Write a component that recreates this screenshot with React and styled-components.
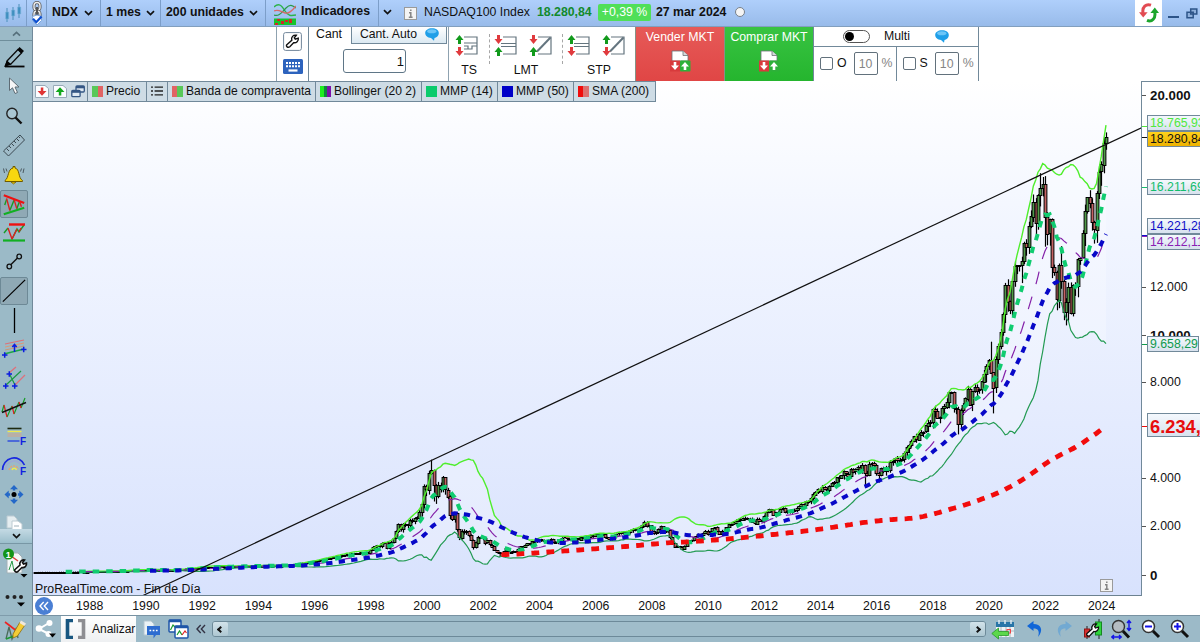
import React from "react";
import styled, { createGlobalStyle, css } from "styled-components";

/* ---------- market data ---------- */

const yearCloses = [132, 141, 156, 177, 223, 200, 330, 360, 398, 404, 576, 821, 990];

// monthly closes, january 1998 to march 2024
const monthCloses = [
  1071, 1194, 1220, 1248, 1192, 1337, 1377, 1140, 1345, 1400, 1557, 1836,
  2127, 1925, 2106, 2137, 2089, 2297, 2271, 2396, 2408, 2638, 2967, 3708,
  3570, 4267, 4398, 3773, 3324, 3764, 3610, 4078, 3570, 3283, 2507, 2342,
  2593, 1909, 1573, 1855, 1800, 1832, 1684, 1470, 1168, 1365, 1596, 1577,
  1550, 1360, 1452, 1278, 1208, 1051, 963, 942, 832, 990, 1116, 984,
  983, 1009, 1018, 1106, 1198, 1201, 1277, 1342, 1304, 1416, 1424, 1468,
  1493, 1471, 1439, 1401, 1466, 1517, 1401, 1369, 1413, 1487, 1572, 1621,
  1520, 1511, 1482, 1421, 1543, 1493, 1605, 1581, 1602, 1580, 1673, 1645,
  1710, 1671, 1703, 1701, 1579, 1575, 1510, 1579, 1654, 1733, 1791, 1757,
  1792, 1762, 1772, 1868, 1929, 1934, 1932, 1989, 2091, 2239, 2090, 2085,
  1842, 1746, 1782, 1918, 2033, 1837, 1849, 1872, 1595, 1335, 1186, 1212,
  1180, 1117, 1237, 1394, 1435, 1477, 1603, 1625, 1719, 1667, 1767, 1860,
  1741, 1819, 1959, 2001, 1852, 1739, 1864, 1768, 1998, 2124, 2118, 2218,
  2281, 2350, 2339, 2404, 2372, 2325, 2363, 2241, 2139, 2360, 2295, 2278,
  2468, 2623, 2755, 2723, 2525, 2616, 2642, 2772, 2799, 2647, 2678, 2661,
  2731, 2738, 2819, 2887, 2981, 2910, 3090, 3073, 3218, 3377, 3487, 3592,
  3522, 3696, 3595, 3582, 3736, 3849, 3892, 4082, 4049, 4158, 4337, 4236,
  4148, 4440, 4333, 4414, 4508, 4396, 4588, 4274, 4181, 4648, 4664, 4593,
  4279, 4201, 4483, 4341, 4523, 4417, 4730, 4771, 4875, 4801, 4810, 4863,
  5116, 5330, 5436, 5583, 5788, 5646, 5880, 5988, 5979, 6248, 6365, 6396,
  6950, 6855, 6581, 6606, 6968, 7041, 7232, 7654, 7628, 6967, 6949, 6330,
  6907, 7097, 7379, 7781, 7128, 7671, 7849, 7691, 7749, 8083, 8404, 8733,
  8992, 8462, 7813, 9001, 9556, 10157, 10906, 12111, 11418, 11053, 12268, 12888,
  12925, 12909, 13091, 13861, 13687, 14555, 14960, 15583, 14690, 15850, 16136, 16320,
  14930, 14238, 14839, 12855, 12643, 11504, 12948, 12272, 10971, 11406, 12030, 10940,
  12102, 12042, 13181, 13246, 14254, 15179, 15757, 15501, 14715, 14410, 15948, 16826,
  17137, 18044, 18280,
];

const extremes = {
  "2000-3": { high: 4816 },
  "2000-4": { low: 3100 },
  "2000-5": { low: 3000 },
  "2015-8": { low: 3787 },
  "2016-2": { low: 3889 },
  "2018-12": { low: 5895 },
  "2020-2": { high: 9736 },
  "2020-3": { low: 6771 },
  "2021-3": { low: 12208 },
  "2021-11": { high: 16765 },
  "2022-1": { low: 13725 },
  "2022-8": { high: 13720 },
  "2022-10": { low: 10441 },
  "2022-11": { low: 10632 },
  "2024-3": { high: 18465, low: 17765 },
};

const random = (n) => {
  const s = Math.sin(n * 127.1) * 43758.5453;
  return s - Math.floor(s);
};

const closes = [];
for (let m = 1; m < 144; m++) {
  const y = Math.floor(m / 12);
  const part = ((m % 12) + 1) / 12;
  const base = yearCloses[y] + (yearCloses[y + 1] - yearCloses[y]) * part;
  closes.push(base * (1 + (random(m) - 0.5) * 0.07));
}
closes.push(...monthCloses);

const STEP = 2.343;
const px = (i) => 35.2 + i * STEP;
const py = (v) => 575.2 - v * 0.02398;

const candles = closes.map((close, i) => {
  const open = i ? closes[i - 1] : close;
  const month = i + 1;
  const key = `${1986 + Math.floor(month / 12)}-${(month % 12) + 1}`;
  const swing = i > 155 && i < 195 ? 0.07 : 0.04;
  const high = Math.max(open, close) * (1 + random(i + 500) * swing * 0.5);
  const low = Math.min(open, close) * (1 - random(i + 900) * swing);
  return { open, close, high, low, ...extremes[key] };
});

const sma = (n) =>
  closes.map((_, i) =>
    i < n - 1 ? null : closes.slice(i - n + 1, i + 1).reduce((a, b) => a + b, 0) / n
  );

const wma = (n) =>
  closes.map((_, i) => {
    if (i < n - 1) return null;
    const sum = closes.slice(i - n + 1, i + 1).reduce((a, b, k) => a + b * (k + 1), 0);
    return sum / ((n * (n + 1)) / 2);
  });

const middle = sma(20);
const deviation = closes.map((_, i) => {
  if (i < 19) return null;
  const part = closes.slice(i - 19, i + 1);
  return Math.sqrt(part.reduce((a, b) => a + (b - middle[i]) ** 2, 0) / 20);
});
const upper = middle.map((v, i) => (v === null ? null : v + 2 * deviation[i]));
const lower = middle.map((v, i) => (v === null ? null : v - 2 * deviation[i]));

const toPoints = (series) =>
  series
    .map((v, i) => (v === null ? null : `${px(i).toFixed(1)},${py(v).toFixed(1)}`))
    .filter(Boolean);

const years = Array.from({ length: 19 }, (_, i) => 1988 + i * 2);

const axisLabels = [
  { text: "20.000", y: 95, bold: true },
  { text: "12.000", y: 287 },
  { text: "10.000", y: 335, bold: true },
  { text: "8.000", y: 382 },
  { text: "4.000", y: 478 },
  { text: "2.000", y: 526 },
  { text: "0", y: 575, bold: true },
];

const priceTags = [
  { text: "18.765,93", top: 115, color: "#4fe83c", y: 125 },
  { text: "18.280,84", top: 131, color: "#111", gold: true, y: 136 },
  { text: "16.211,69", top: 179, color: "#12bd6c", y: 186 },
  { text: "14.221,28", top: 218, color: "#0f0fc8", y: 234 },
  { text: "14.212,11", top: 234, color: "#8a1fb4", y: 235 },
  { text: "9.658,29", top: 336, color: "#0f9a4c", width: 52, y: 343 },
  { text: "6.234,53", top: 413, color: "#e80c0c", big: true, y: 425 },
];

/* ---------- chart ---------- */

const Chart = () => (
  <ChartSvg viewBox="33 81 1109 515">
    <defs>
      <linearGradient id="sky" x1="0" y1="0" x2="0" y2="1">
        <stop offset="0" stopColor="#ffffff" />
        <stop offset="0.3" stopColor="#f1f5ff" />
        <stop offset="1" stopColor="#d8e2fd" />
      </linearGradient>
    </defs>
    <rect x="33" y="81" width="1109" height="515" fill="url(#sky)" />
    <polygon
      points={[...toPoints(upper), ...toPoints(lower).reverse()].join(" ")}
      fill="#fff"
      opacity="0.25"
    />
    <g stroke="#000" strokeWidth="1">
      {candles.map((c, i) => {
        const x = Math.round(px(i)) + 0.5;
        const top = Math.round(py(Math.max(c.open, c.close))) + 0.5;
        const height = Math.max(1, Math.round(Math.abs(c.open - c.close) * 0.02398));
        return (
          <g key={i}>
            <path d={`M${x} ${py(c.high).toFixed(1)}V${(py(c.low) + 0.6).toFixed(1)}`} strokeWidth="1.2" />
            <rect
              x={x - 1.4}
              y={top}
              width="2.8"
              height={height}
              fill={c.close >= c.open ? "#4f9a48" : "#c46262"}
            />
          </g>
        );
      })}
    </g>
    <g fill="none">
      <polyline points={toPoints(upper).join(" ")} stroke="#4fee2c" strokeWidth="1.4" />
      <polyline points={toPoints(lower).join(" ")} stroke="#229a52" strokeWidth="1.2" />
      <polyline points={toPoints(middle).join(" ")} stroke="#8420a8" strokeWidth="1.2" strokeDasharray="13 13" />
      <polyline points={toPoints(wma(14)).join(" ")} stroke="#10cc70" strokeWidth="4" strokeDasharray="6.5 7" />
      <polyline points={toPoints(wma(50)).join(" ")} stroke="#0808c8" strokeWidth="4" strokeDasharray="6.3 6.3" />
      <polyline points={toPoints(sma(200)).join(" ")} stroke="#f20c0c" strokeWidth="4.8" strokeDasharray="7.8 7.2" />
    </g>
    <path d="M143 595.5L1142 127.5" stroke="#111" strokeWidth="1.2" />
    <path d="M33 595.5H1142" stroke="#6c8290" />
  </ChartSvg>
);

/* ---------- icons ---------- */

const Chevron = ({ up, color = "#111" }) => (
  <svg width="9" height="6" viewBox="0 0 9 6">
    <path d={up ? "M1 4.6L4.5 1.4L8 4.6" : "M1 1.2L4.5 4.6L8 1.2"} fill="none" stroke={color} strokeWidth="1.7" />
  </svg>
);

const CandlesIcon = () => (
  <svg width="20" height="22" viewBox="0 0 20 22">
    <path d="M4 5V19M10 4V17M16 1V15" stroke="#4c8fba" />
    <path d="M2.7 9h3v7h-3zM8.7 7h3v6h-3zM14.7 4h3v7h-3z" fill="#3f8fc0" stroke="#7ab4d6" strokeWidth=".6" />
  </svg>
);

const LinkIcon = () => (
  <svg width="16" height="25" viewBox="0 0 16 25">
    <rect x="5" y="1.5" width="6" height="8" rx="3" fill="none" stroke="#555" strokeWidth="3" />
    <rect x="5" y="1.5" width="6" height="8" rx="3" fill="none" stroke="#eee" strokeWidth="1.4" />
    <rect x="5" y="10" width="6" height="9" rx="3" fill="none" stroke="#555" strokeWidth="3" />
    <rect x="5" y="10" width="6" height="9" rx="3" fill="none" stroke="#eee" strokeWidth="1.4" />
    <path d="M8 6V14" stroke="#555" strokeWidth="2" />
    <path d="M3.5 15.5L8 14L12.5 15.5V19.5L8 24L3.5 19.5Z" fill="#fff" stroke="#7da6dc" />
    <path d="M4 17.8L7.2 21.2L12.6 15.5" fill="none" stroke="#0c4fd0" strokeWidth="2.2" />
  </svg>
);

const IndicatorsIcon = () => (
  <svg width="22" height="22" viewBox="0 0 22 22">
    <path d="M0 4C5-1 8 3 11 8S17 13 22 12" fill="none" stroke="#2db34a" strokeWidth="1.4" />
    <path d="M0 12C5 14 8 9 12 5S18 2 22 5" fill="none" stroke="#2a9a48" strokeWidth="1.2" />
    <path d="M0 8C5 6 7 9 11 10S18 8 22 3" fill="none" stroke="#d96a6a" strokeWidth="1.3" />
    <rect y="15.5" width="22" height="6.5" fill="#16c42c" />
    <path d="M3 16h3v2H3zM7 18h3v3H7zM11 17h3v2h-3zM15 16h3v4h-3zM1 20h3v2H1z" fill="#d02828" />
  </svg>
);

const InfoIcon = () => (
  <svg width="13" height="13" viewBox="0 0 13 13">
    <rect x=".5" y=".5" width="12" height="12" fill="#f4f4f4" stroke="#9a9a9a" />
    <path d="M6.8 2.4V4.1M5 5.7H6.8V10M4.8 10.2H8.6" fill="none" stroke="#858585" strokeWidth="1.5" />
  </svg>
);

const RefreshIcon = () => (
  <svg width="22" height="20" viewBox="0 0 22 20">
    <path d="M13 2.2C8 .5 4 4 5 10" fill="none" stroke="#e24b52" strokeWidth="3" />
    <path d="M1 9.3H9.6L5.2 14.6Z" fill="#e24b52" />
    <path d="M9 17.3C14 19.5 18 15 16.7 9" fill="none" stroke="#1ca52c" strokeWidth="3" />
    <path d="M12.4 10L16.8 4.6L21 10Z" fill="#1ca52c" />
  </svg>
);

const RestoreIcon = () => (
  <svg width="12" height="11" viewBox="0 0 12 11">
    <path d="M4.7.9H10.8V6H4.7zM1 4.2H7.2V9.8H1z" fill="#8fb0dc" stroke="#2d5488" strokeWidth="1.5" />
  </svg>
);

const WindowsIcon = () => (
  <svg width="14" height="13" viewBox="0 0 14 13">
    <rect x="5" y="1" width="8.3" height="6" rx="1" fill="#dfe9f2" stroke="#355784" strokeWidth="1.3" />
    <rect x="5" y="1" width="8.3" height="2.3" fill="#355784" />
    <rect x=".8" y="5.5" width="8.3" height="6.2" rx="1" fill="#dfe9f2" stroke="#355784" strokeWidth="1.3" />
    <rect x=".8" y="5.5" width="8.3" height="2.3" fill="#355784" />
  </svg>
);

const PageArrowIcon = ({ down }) => (
  <svg width="14" height="13" viewBox="0 0 14 13">
    <path d="M.5.5H10L13.5 3.5V12.5H.5Z" fill="#fbfdff" stroke="#98aab8" />
    <path
      d={down ? "M5.8 2.5H8.3V6H11.5L7 10.8L2.6 6H5.8Z" : "M5.8 10.6H8.3V7H11.5L7 2.2L2.6 7H5.8Z"}
      fill={down ? "#e03636" : "#14a81c"}
    />
  </svg>
);

const ListIcon = () => (
  <svg width="12" height="10" viewBox="0 0 12 10">
    <path d="M0 1.2H2M0 5H2M0 8.8H2M3.6 1.2H12M3.6 5H12M3.6 8.8H12" stroke="#222" strokeWidth="1.3" />
  </svg>
);

const wrenchPath =
  "M2 11.5L7 7C6 4 8.5 1.5 11.5 2L9.5 4.5L10.5 6L13.5 5C14 8 11.5 10 8.8 9.5L5 13.5C3 15 .8 13 2 11.5Z";

const WrenchIcon = () => (
  <svg width="19" height="19" viewBox="0 0 19 19">
    <rect x=".6" y=".6" width="17.8" height="17.8" rx="2" fill="#fff" stroke="#71869a" />
    <path d={wrenchPath} transform="translate(1.8 1.2)" fill="none" stroke="#111" strokeWidth="1.4" />
  </svg>
);

const KeyboardIcon = () => (
  <svg width="20" height="15" viewBox="0 0 20 15">
    <rect width="20" height="15" rx="1.5" fill="#2d63bd" />
    <path d="M3 4H17M3 7.3H17" stroke="#fff" strokeWidth="2" strokeDasharray="2 1" />
    <path d="M5.5 11.5H14.5" stroke="#fff" strokeWidth="2.2" />
  </svg>
);

const BubbleIcon = () => (
  <svg width="14" height="13" viewBox="0 0 14 13">
    <path
      d="M7 .3C11 .3 13.8 2.3 13.8 5S11.5 9.8 9.5 10L9 12.7L6 10C2.5 9.7.2 7.6.2 5S3 .3 7 .3Z"
      fill="#1f9fe8"
    />
    <ellipse cx="6.8" cy="3.3" rx="4.6" ry="2" fill="#6cc6f8" />
  </svg>
);

const ArrowUp = ({ x, y }) => (
  <path
    d={`M${x - 1.5} ${y + 9}V${y + 5}H${x - 4}L${x} ${y}L${x + 4} ${y + 5}H${x + 1.5}V${y + 9}Z`}
    fill="#129a1c"
  />
);

const ArrowDown = ({ x, y }) => (
  <path
    d={`M${x - 1.5} ${y}V${y + 4}H${x - 4}L${x} ${y + 9}L${x + 4} ${y + 4}H${x + 1.5}V${y}Z`}
    fill="#e03a3e"
  />
);

const OrderIcon = ({ kind, sellFirst }) => (
  <svg width="24" height="23" viewBox="0 0 24 23">
    <g fill="none" stroke="#64757f" strokeWidth="1.2">
      {kind === "steps" && <path d="M9 3H22V20H9M9 15H17V12H22M9 9H22M9 12H13V15" />}
      {kind === "levels" && <path d="M9 3H22V9.5H7M22 9.5V12.5M7 12.5H22V20H9" />}
      {kind === "line" && <path d="M9 3H22V20H9" />}
      {kind === "line" && <path d="M8 17.5L21.5 3.5" strokeWidth="2" />}
    </g>
    {sellFirst ? <ArrowDown x={4.5} y={1} /> : <ArrowUp x={4.5} y={1} />}
    {sellFirst ? <ArrowUp x={4.5} y={13} /> : <ArrowDown x={4.5} y={13} />}
  </svg>
);

const MarketIcon = () => (
  <svg width="22" height="22" viewBox="0 0 22 22">
    <path d="M3 1H14L19 5.5V11H3Z" fill="#fff" stroke="#6d7276" strokeWidth=".8" />
    <path d="M14 1V5.5H19" fill="#d5dadd" stroke="#6d7276" strokeWidth=".8" />
    <rect x="1" y="10.5" width="10" height="11" fill="#d83a3c" />
    <rect x="11" y="10.5" width="10.5" height="11" rx="1" fill="#2eb03a" />
    <path
      d="M4.7 12H7.3V15.5H10L6 20L2 15.5H4.7ZM14.7 20H17.3V16.5H20L16 12L12 16.5H14.7Z"
      fill="#fff"
    />
  </svg>
);

const ToolText = styled.text`
  font-size: ${({ $light }) => ($light ? 9 : 10)}px;
  font-weight: 700;
  fill: ${({ $light }) => ($light ? "white" : "#1020e0")};
`;

const toolIcons = {
  draw: (
    <>
      <path d="M7 17L18 5.5L21.5 9L11 20L6 21Z" fill="none" stroke="#0a0a0a" strokeWidth="1.3" />
      <path d="M17.5 5.5L19.5 3L24 7L21.5 9.5ZM7 16.5L11.5 20.5L4 23Z" fill="#050505" />
      <path d="M5 22.5H24.5" stroke="#050505" strokeWidth="1.8" />
    </>
  ),
  cursor: <path d="M9.5 5V17.5L12.5 14.8L15 20.5L17.5 19.5L15 14H19Z" fill="#f7f7f7" stroke="#5e6c75" />,
  zoom: (
    <>
      <circle cx="12" cy="11.5" r="5.2" fill="#a9c6d2" stroke="#222" strokeWidth="1.4" />
      <path d="M15.5 15.5L21.5 21.5" stroke="#111" strokeWidth="2.4" />
    </>
  ),
  ruler: (
    <>
      <path d="M3.5 20L20 4L24.5 9L8.5 25Z" fill="#a0bcc9" stroke="#3b4a52" />
      <path
        d="M6.5 17.5L9 20M9 15L11 17M11.5 12.5L14 15M14 10L16 12M16.5 7.5L19 10M18.5 5.5L20 7"
        stroke="#3b4a52"
      />
    </>
  ),
  bell: (
    <>
      <path d="M5 19.5C9 17 7.5 8 13 7V5.5H15V7C20 8 18 17 22.5 19.5V20.5H5Z" fill="#f7d70f" stroke="#6f5a00" />
      <path d="M11 21H16L13.5 23Z" fill="#f2c800" stroke="#6f5a00" strokeWidth=".7" />
      <path
        d="M6 7.5L7 10.5M3.5 7.5L4.5 12M21.5 7.5L20.5 10.5M24 7.5L23 12"
        fill="none"
        stroke="#4b5960"
      />
    </>
  ),
  wedge: (
    <>
      <path d="M4 15L6 9M9.5 21L14 10M17 19L20 11" stroke="#169c24" strokeWidth="1.5" />
      <path d="M6 8L9.5 21M14 9L17 19M20 11L22 17" stroke="#dc2020" strokeWidth="1.5" />
      <path d="M3 4.5L25 13" stroke="#ee1111" strokeWidth="2.4" />
      <path d="M3 25L25 18" stroke="#11b022" strokeWidth="2.4" />
    </>
  ),
  range: (
    <>
      <path d="M4 14L8 9M12 20L17 10L19 13L24 6" fill="none" stroke="#169c24" strokeWidth="1.4" />
      <path d="M8 9L12 20L17 10M19 13L21 9" fill="none" stroke="#dc2020" strokeWidth="1.4" />
      <path d="M9 5.5H25" stroke="#ee1111" strokeWidth="2.4" />
      <path d="M3 21.5H25" stroke="#11b022" strokeWidth="2.2" />
    </>
  ),
  segment: (
    <>
      <path d="M9.5 18L19 8.5" stroke="#111" strokeWidth="1.5" />
      <circle cx="9.3" cy="18.5" r="2.3" fill="#9bbac6" stroke="#111" strokeWidth="1.3" />
      <circle cx="19.2" cy="8.5" r="2.3" fill="#9bbac6" stroke="#111" strokeWidth="1.3" />
    </>
  ),
  line: <path d="M2 25.5L26 2" stroke="#000" strokeWidth="1.3" />,
  vertical: <path d="M14.5 2V27" stroke="#000" strokeWidth="1.3" />,
  channel: (
    <>
      <path d="M5 9L24 5" stroke="#dc7078" strokeWidth="1.2" />
      <path d="M5 12L24 8" stroke="#dc9878" />
      <path d="M5 15L24 11" stroke="#c89878" />
      <path d="M4 19L24 14" stroke="#1ca845" strokeWidth="1.4" />
      <path
        d="M2 20H7.5M4.7 17.3V22.7M21 14.5H26.5M23.7 11.8V17.2M14.5 17V10M12.3 12L14.5 9.5L16.7 12"
        fill="none"
        stroke="#0b1de0"
        strokeWidth="1.5"
      />
    </>
  ),
  fork: (
    <>
      <path d="M9 8L16 2M15 20L25 10" stroke="#e0707b" strokeWidth="1.3" />
      <path d="M6 20L21 6M9 8L15 20" stroke="#1c9a45" strokeWidth="1.2" />
      <path
        d="M6.5 9H12M9.3 6.3V11.7M3 21H8.5M5.7 18.3V23.7M12 21H17.5M14.7 18.3V23.7"
        stroke="#0b1de0"
        strokeWidth="1.5"
      />
    </>
  ),
  regression: (
    <>
      <path d="M2 18L4 11M7 23L12 12M14 20L19 8M21 14L25 4" stroke="#169c24" strokeWidth="1.2" />
      <path d="M4 11L7 23M12 12L14 20M19 8L21 14" stroke="#dc2020" strokeWidth="1.2" />
      <path d="M2 18.5L26 8.5" stroke="#111" strokeWidth="1.4" />
    </>
  ),
  fibonacci: (
    <>
      <path d="M7.5 5.5H21.5" stroke="#1d2910" strokeWidth="1.6" />
      <path d="M7.5 8.5H21.5" stroke="#efe94c" strokeWidth="1.4" />
      <path d="M7.5 11H21.5M7.5 13H21.5" stroke="#d8a483" strokeWidth="1.2" />
      <path d="M7.5 18H19.5" stroke="#2948e0" strokeWidth="1.4" />
      <ToolText x="20" y="22">F</ToolText>
    </>
  ),
  arc: (
    <>
      <path d="M2.5 18A11.5 12 0 0 1 24.5 13" fill="none" stroke="#1727e0" strokeWidth="1.6" />
      <path d="M5.5 18A8.5 9 0 0 1 21 13" fill="none" stroke="#9cabd3" strokeWidth="1.8" />
      <path d="M9 18A5 5 0 0 1 18.5 17" fill="none" stroke="#dfa57a" strokeWidth="1.5" strokeDasharray="2 1" />
      <path d="M12 18A2.5 3 0 0 1 16.5 18" fill="none" stroke="#efe94c" strokeWidth="1.6" />
      <ToolText x="20" y="22.5">F</ToolText>
    </>
  ),
  move: (
    <>
      <circle cx="14" cy="13.5" r="2.5" fill="#000" />
      <path
        d="M14 4L18 8.2H15.2V9.5H12.8V8.2H10ZM14 23L18 18.8H15.2V17.5H12.8V18.8H10ZM4.5 13.5L8.7 9.5V12.3H10V14.7H8.7V17.5ZM23.5 13.5L19.3 9.5V12.3H18V14.7H19.3V17.5Z"
        fill="#2468c8"
      />
    </>
  ),
  copy: (
    <>
      <path d="M7 6H14L17 9V18H7Z" fill="#e5edf0" stroke="#bccbd2" />
      <path d="M12 11H18L22 14V22H12Z" fill="#fff" stroke="#bccbd2" />
      <path d="M14 16H19" stroke="#9fb1ba" />
    </>
  ),
};

const tools = [
  "draw", "cursor", "zoom", "ruler", "bell", "wedge", "range", "segment", "line",
  "vertical", "channel", "fork", "regression", "fibonacci", "arc", "move", "copy",
];
const pressed = ["wedge", "line"];

const ObjectsIcon = () => (
  <svg width="28" height="34" viewBox="0 0 28 34">
    <path d="M7 7H18L22 11V27H7Z" fill="#f4f8f8" stroke="#a2b0b6" />
    <path d="M9 24L12 15M14 25L12 15" stroke="#2a9a48" />
    <path d="M11 10L18 15" stroke="#dd3d3d" strokeWidth="1.5" />
    <circle cx="8.5" cy="8" r="5.5" fill="#139418" />
    <ToolText x="5.8" y="11.5" $light>1</ToolText>
    <path d={wrenchPath} transform="translate(13 12)" fill="#fff" stroke="#111" strokeWidth="1.6" />
    <path d="M20.5 28H27.5L24 31.5Z" fill="#000" />
  </svg>
);

const MoreIcon = () => (
  <svg width="28" height="16" viewBox="0 0 28 16">
    <circle cx="7.5" cy="4" r="2" fill="#222" />
    <circle cx="14.5" cy="4" r="2" fill="#222" />
    <circle cx="21" cy="4" r="2" fill="#222" />
    <path d="M17 9.5H25L21 13.5Z" fill="#000" />
  </svg>
);

const PencilChartIcon = () => (
  <svg width="24" height="22" viewBox="0 0 24 22">
    <path d="M3 20L6 8L9 20L13 10L15 19" fill="none" stroke="#4b6b5a" strokeWidth="1.3" />
    <path d="M2 3L15 13" stroke="#e22" strokeWidth="1.6" />
    <path d="M3 20L11 17" stroke="#1a9a30" strokeWidth="1.5" />
    <path d="M10 15L17 3L22 6L14.5 17L10 19Z" fill="#f5cc35" stroke="#8c6d13" strokeWidth=".8" />
    <path d="M16.5 4L18 1.5L23 4.5L21.5 7Z" fill="#f1e8dc" />
  </svg>
);

const ShareIcon = () => (
  <svg width="22" height="20" viewBox="0 0 22 20">
    <path d="M14 4L4 10L14 15" fill="none" stroke="#fff" strokeWidth="2" />
    <circle cx="14.5" cy="4" r="3" fill="#fff" />
    <circle cx="4" cy="9.5" r="3.3" fill="#fff" />
    <circle cx="13.5" cy="15" r="3" fill="#fff" />
    <path d="M14 14.5H21L17.5 18.5Z" fill="#000" />
  </svg>
);

const BracketsIcon = () => (
  <svg width="21" height="20" viewBox="0 0 21 20">
    <path d="M8 1.5H2.5V18.5H8" fill="none" stroke="#175680" strokeWidth="3.6" />
    <path d="M13 1.5H18.5V18.5H13" fill="none" stroke="#8e8e92" strokeWidth="3.6" />
  </svg>
);

const ChatIcon = () => (
  <svg width="18" height="19" viewBox="0 0 18 19">
    <path d="M1 1H8L11 4V15H1Z" fill="#eaf2f6" stroke="#b4c5cf" />
    <path d="M4 6H17V15H13L10.5 18.5V15H4Z" fill="#2d6cd0" />
    <path d="M6.5 10.5H15" stroke="#fff" strokeWidth="1.7" strokeDasharray="1.7 1.5" />
  </svg>
);

const ChartsIcon = () => (
  <svg width="21" height="20" viewBox="0 0 21 20">
    <rect x="1" y="1" width="12" height="12" rx="1" fill="#fff" stroke="#1e56a8" strokeWidth="1.5" />
    <path d="M1 2H13" stroke="#1e56a8" strokeWidth="2.5" />
    <path d="M2.5 11L5 6L8 9" fill="none" stroke="#1a9a30" strokeWidth="1.2" />
    <rect x="7" y="7" width="13" height="12" rx="1" fill="#fff" stroke="#1e56a8" strokeWidth="1.5" />
    <path d="M7 8H20" stroke="#1e56a8" strokeWidth="2.5" />
    <path d="M9 16L11.5 12L14 16" fill="none" stroke="#1a9a30" strokeWidth="1.2" />
    <path d="M14 16L17 12L18.5 14" fill="none" stroke="#d22" strokeWidth="1.2" />
  </svg>
);

const DoubleLeft = ({ color = "#334" }) => (
  <svg width="10" height="10" viewBox="0 0 10 10">
    <path d="M4.7 1L1 5L4.7 9M9 1L5.3 5L9 9" fill="none" stroke={color} strokeWidth="1.4" />
  </svg>
);

const CalendarBackIcon = () => (
  <svg width="24" height="21" viewBox="0 0 24 21">
    <rect x="5" y="3" width="18" height="15" fill="#eef3f6" />
    <rect x="5" y="3" width="18" height="5" fill="#2875a8" />
    <path d="M8 1V5M14 1V5M20 1V5" stroke="#d9e9f2" strokeWidth="1.5" />
    <path d="M5 12H23M10 8V18M15 8V18M19 8V18" stroke="#a9b6be" />
    <rect x="16" y="10.5" width="3.5" height="3.5" fill="none" stroke="#e44" />
    <path
      d="M.8 14.5L7.5 9V12.5H17.5V16.5H7.5V20Z"
      fill="#5cd84c"
      stroke="#279a28"
      strokeWidth=".8"
    />
  </svg>
);

const UndoIcon = ({ redo }) => (
  <svg width="18" height="18" viewBox="0 0 18 18">
    <g transform={redo ? "translate(18 0) scale(-1 1)" : undefined}>
      <path
        d="M1 6L7.5 1V4C15 4 18 10 12 17C14 11 12 8.5 7.5 8.5V11Z"
        fill={redo ? "#72a9d2" : "#1166d8"}
      />
    </g>
  </svg>
);

const CandleSettingsIcon = () => (
  <svg width="20" height="21" viewBox="0 0 20 21">
    <path d="M4 7V20M16 0V20" stroke="#222" />
    <rect x="1.5" y="10" width="5" height="8" fill="#d83030" stroke="#8e1414" />
    <rect x="12.5" y="3" width="6" height="13" fill="#2ed53c" stroke="#158722" />
    <path d={wrenchPath} transform="translate(2 3)" fill="#fff" stroke="#111" strokeWidth="1.3" />
  </svg>
);

const LensIcon = ({ sign }) => (
  <svg width="20" height="20" viewBox="0 0 20 20">
    <path d="M11.5 11.5L18 18" stroke="#111" strokeWidth="3" />
    <circle cx="7.5" cy="7.5" r="6" fill="#fff" stroke="#333" strokeWidth="1.5" />
    <path d={sign === "plus" ? "M4 7.5H11M7.5 4V11" : "M4 7.5H11"} stroke="#1313e8" strokeWidth="2" />
  </svg>
);

const FitIcon = () => (
  <svg width="21" height="21" viewBox="0 0 21 21">
    <path d="M11 11L18 18.5" stroke="#111" strokeWidth="3" />
    <circle cx="7.5" cy="7.5" r="6" fill="#b4bcc2" stroke="#333" strokeWidth="1.4" />
    <path
      d="M18 2V11M16 4L18 1.5L20 4M16 9L18 11.5L20 9M1 18H9M3 16L.8 18L3 20M8 16L10.2 18L8 20"
      fill="none"
      stroke="#1313e8"
      strokeWidth="1.4"
    />
  </svg>
);

/* ---------- page ---------- */

const App = () => (
  <>
    <GlobalStyle />
    <Screen>
      <Header>
        <Menu $width={27}><CandlesIcon /></Menu>
        <Menu $width={20}><LinkIcon /></Menu>
        <Menu $width={54} $spread><span>NDX</span><Chevron /></Menu>
        <Menu $width={60} $spread><span>1 mes</span><Chevron /></Menu>
        <Menu $width={105} $spread><span>200 unidades</span><Chevron /></Menu>
        <Menu $width={113} $raised><IndicatorsIcon /><span>Indicadores</span></Menu>
        <Quote>
          <Chevron />
          <InfoSlot><InfoIcon /></InfoSlot>
          <Name>NASDAQ100 Index</Name>
          <Last>18.280,84</Last>
          <Change>+0,39 %</Change>
          <Day>27 mar 2024</Day>
          <Dot />
        </Quote>
        <Refresh><RefreshIcon /></Refresh>
        <WindowButtons><Minimize /><RestoreIcon /></WindowButtons>
      </Header>

      <Body>
        <Sidebar>
          <ScrollUp><Chevron up color="#56707c" /></ScrollUp>
          <ToolList>
            {tools.map((name) => (
              <Tool key={name} $pressed={pressed.includes(name)}>
                <svg width="28" height="28" viewBox="0 0 28 28">{toolIcons[name]}</svg>
              </Tool>
            ))}
          </ToolList>
          <ScrollDown><Chevron /></ScrollDown>
          <ObjectsSlot><ObjectsIcon /></ObjectsSlot>
          <MoreSlot><MoreIcon /></MoreSlot>
          <PencilSlot><PencilChartIcon /></PencilSlot>
        </Sidebar>

        <Main>
          <TradePanel>
            <Spacer />
            <Shortcuts><WrenchIcon /><KeyboardIcon /></Shortcuts>
            <Quantity>
              <QuantityTop>
                <span>Cant</span>
                <AutoButton>Cant. Auto<BubbleIcon /></AutoButton>
              </QuantityTop>
              <QuantityInput>1</QuantityInput>
            </Quantity>
            <Orders>
              <OrderGroup $width={40}>
                <IconPair><OrderIcon kind="steps" /></IconPair>
                <span>TS</span>
              </OrderGroup>
              <OrderGroup $width={73}>
                <IconPair><OrderIcon kind="levels" sellFirst /><OrderIcon kind="line" sellFirst /></IconPair>
                <span>LMT</span>
              </OrderGroup>
              <OrderGroup $width={73}>
                <IconPair><OrderIcon kind="levels" /><OrderIcon kind="line" /></IconPair>
                <span>STP</span>
              </OrderGroup>
            </Orders>
            <MarketButton $sell>Vender MKT<MarketIcon /></MarketButton>
            <MarketButton>Comprar MKT<MarketIcon /></MarketButton>
            <Multi>
              <MultiTop><Switch><i /></Switch><span>Multi</span><BubbleIcon /></MultiTop>
              <MultiBottom>
                {["O", "S"].map((name) => (
                  <Leg key={name}><Check /><span>{name}</span><Percent>10</Percent><em>%</em></Leg>
                ))}
              </MultiBottom>
            </Multi>
            <Rest />
          </TradePanel>

          <ChartRow>
            <Plot>
              <Chart />
              <Legend>
                <LegendItem $width={55} $icons>
                  <PageArrowIcon down /><PageArrowIcon /><WindowsIcon />
                </LegendItem>
                <LegendItem $width={59}><Swatch $colors={["#58c858", "#e06464"]} />Precio</LegendItem>
                <LegendItem $width={21} $icons><ListIcon /></LegendItem>
                <LegendItem $width={148}><Swatch $colors={["#e06464", "#58c858"]} />Banda de compraventa</LegendItem>
                <LegendItem $width={106}><Swatch $colors={["#1fee1f", "#0c8a3c", "#7c10a8"]} />Bollinger (20 2)</LegendItem>
                <LegendItem $width={76}><Swatch $colors={["#0acb6c"]} />MMP (14)</LegendItem>
                <LegendItem $width={76}><Swatch $colors={["#0000c8"]} />MMP (50)</LegendItem>
                <LegendItem $width={82}><Swatch $colors={["#f00c0c", "#dc7070"]} />SMA (200)</LegendItem>
              </Legend>
              <Credit>ProRealTime.com - Fin de Día</Credit>
              <PlotInfo><InfoIcon /></PlotInfo>
            </Plot>
            <PriceAxis>
              {axisLabels.map(({ text, y, bold }) => (
                <AxisLabel key={text} style={{ top: y - 81 }} $bold={bold}>{text}</AxisLabel>
              ))}
              {priceTags.map(({ text, top, y, ...look }) => (
                <React.Fragment key={text}>
                  <Mark style={{ top: y - 81 }} $color={look.color} />
                  <PriceTag
                    style={{ top: top - 81 }}
                    $color={look.color}
                    $gold={look.gold}
                    $big={look.big}
                    $width={look.width}
                  >
                    {text}
                  </PriceTag>
                </React.Fragment>
              ))}
            </PriceAxis>
          </ChartRow>

          <TimeAxis>
            <Rewind><Circle><DoubleLeft color="#fff" /></Circle></Rewind>
            {years.map((year) => (
              <Year key={year}>{year}</Year>
            ))}
          </TimeAxis>

          <Footer>
            <Share><ShareIcon /></Share>
            <Analyze><BracketsIcon /><span>Analizar</span></Analyze>
            <FooterIcons><ChatIcon /><ChartsIcon /><DoubleLeft /></FooterIcons>
            <ScrollBar>
              <ScrollButton><Caret $left /></ScrollButton>
              <ScrollButton><Caret /></ScrollButton>
            </ScrollBar>
            <Actions>
              <Action $width={34}><CalendarBackIcon /></Action>
              <Action><UndoIcon /></Action>
              <Action><UndoIcon redo /></Action>
              <Action><CandleSettingsIcon /></Action>
              <Action><FitIcon /></Action>
              <Action><LensIcon sign="minus" /></Action>
              <Action><LensIcon sign="plus" /></Action>
            </Actions>
          </Footer>
        </Main>
      </Body>
    </Screen>
  </>
);

export default App;

const line = "#71899a";

const GlobalStyle = createGlobalStyle`
  * {
    box-sizing: border-box;
  }
  body {
    margin: 0;
    overflow: hidden;
    font-family: "Liberation Sans", Arial, sans-serif;
    font-size: 12.3px;
    color: #111;
  }
  svg {
    display: block;
    flex-shrink: 0;
  }
`;

const Screen = styled.div`
  width: 1200px;
  height: 642px;
  display: flex;
  flex-direction: column;
  overflow: hidden;
  background: white;
`;

const Header = styled.div`
  height: 27px;
  flex-shrink: 0;
  display: flex;
  background: linear-gradient(#afcffb, #98bbea);
  border-bottom: 1px solid #829fbe;
  white-space: nowrap;
`;

const Menu = styled.div`
  width: ${({ $width }) => $width}px;
  flex-shrink: 0;
  display: flex;
  align-items: center;
  justify-content: ${({ $spread }) => ($spread ? "space-between" : "center")};
  gap: 5px;
  padding: ${({ $spread }) => ($spread ? "0 7px 2px 5px" : "0")};
  padding-bottom: ${({ $raised }) => $raised && "4px"};
  font-weight: 700;
  border-right: 1px solid #7c9ec9;

  svg {
    margin-top: ${({ $raised }) => ($raised ? "5px" : "1px")};
  }
`;

const Quote = styled.div`
  flex: 1;
  display: flex;
  align-items: center;
  padding: 0 0 2px 4px;
`;

const InfoSlot = styled.div`
  margin: 2px 7px 0 12px;
`;

const Name = styled.span`
  width: 113px;
`;

const Last = styled.span`
  width: 61px;
  font-weight: 700;
  color: #128a2c;
`;

const Change = styled.span`
  width: 53px;
  height: 17px;
  line-height: 17px;
  text-align: center;
  font-size: 12.3px;
  color: white;
  background: #50df58;
  border-radius: 2px;
`;

const Day = styled.span`
  width: 79px;
  margin-left: 5px;
  font-weight: 700;
`;

const Dot = styled.div`
  width: 10px;
  height: 10px;
  border: 1px solid #77808a;
  border-radius: 50%;
  background: #f4f4f4;
`;

const Refresh = styled.div`
  width: 27px;
  display: flex;
  align-items: center;
  justify-content: center;
  background: white;
`;

const WindowButtons = styled.div`
  width: 38px;
  display: flex;
  gap: 7px;
  align-items: center;
  padding-left: 6px;
`;

const Minimize = styled.div`
  width: 11px;
  height: 2px;
  margin-top: 7px;
  background: #2d5488;
`;

const Body = styled.div`
  flex: 1;
  display: flex;
  min-height: 0;
`;

const Sidebar = styled.div`
  width: 33px;
  flex-shrink: 0;
  display: flex;
  flex-direction: column;
  background: #9bbac7;
  border-right: 1px solid ${line};
`;

const ScrollUp = styled.div`
  height: 14px;
  display: flex;
  align-items: center;
  justify-content: center;
  border-bottom: 1px solid #6f8e9b;
`;

const ToolList = styled.div`
  height: 488px;
  padding-top: 2.5px;
  overflow: hidden;
`;

const Tool = styled.div`
  width: 28px;
  height: 29.15px;
  display: flex;
  align-items: center;
  ${({ $pressed }) =>
    $pressed &&
    css`
      svg {
        background: #8fa9b5;
        border: 1px solid #6d8996;
        border-radius: 2px;
      }
    `}
`;

const ScrollDown = styled.div`
  height: 15px;
  display: flex;
  align-items: center;
  justify-content: center;
  background: linear-gradient(#c4dae4, #9bbecb);
  border-bottom: 1px solid #7897a5;
`;

const ObjectsSlot = styled.div`
  height: 47px;
  padding-top: 2px;
`;

const MoreSlot = styled.div`
  height: 24px;
  padding-top: 2px;
`;

const PencilSlot = styled.div`
  flex: 1;
  padding: 3px 0 0 3px;
  border-top: 1px solid #7f9cab;
`;

const Main = styled.div`
  flex: 1;
  min-width: 0;
  display: flex;
  flex-direction: column;
`;

const TradePanel = styled.div`
  height: 54px;
  flex-shrink: 0;
  display: flex;
  background: white;
`;

const Spacer = styled.div`
  width: 243px;
`;

const Rest = styled.div`
  flex: 1;
`;

const Shortcuts = styled.div`
  width: 33px;
  display: flex;
  flex-direction: column;
  align-items: center;
  gap: 8px;
  padding-top: 5px;
  border-left: 1px solid #8fa2b0;
  border-right: 1px solid ${line};
`;

const Quantity = styled.div`
  width: 140px;
  display: flex;
  flex-direction: column;
  border-right: 1px solid #8fa2b0;
`;

const QuantityTop = styled.div`
  height: 17px;
  display: flex;
  justify-content: space-between;
  align-items: flex-start;
  padding: 0 1px 0 7px;
`;

const AutoButton = styled.div`
  width: 96px;
  height: 17px;
  display: flex;
  align-items: center;
  gap: 8px;
  padding: 0 0 2px 8px;
  font-size: 12.2px;
  white-space: nowrap;
  background: linear-gradient(#fff, #dbe9f2);
  border: 1px solid ${line};
  border-top: none;
`;

const QuantityInput = styled.div`
  width: 63px;
  height: 24px;
  margin: 5px 0 0 34px;
  padding-right: 1px;
  line-height: 23px;
  text-align: right;
  font-size: 13px;
  border: 1px solid #5f7687;
  border-radius: 3px;
`;

const Orders = styled.div`
  width: 186px;
  display: flex;
  padding-top: 7px;
`;

const OrderGroup = styled.div`
  width: ${({ $width }) => $width}px;
  display: flex;
  flex-direction: column;
  align-items: center;
  gap: 6px;

  & + & {
    border-left: 1px dashed #a6a6a6;
    height: 30px;
  }
`;

const IconPair = styled.div`
  display: flex;
  gap: 11px;
  margin-right: 5px;
`;

const MarketButton = styled.div`
  width: 89px;
  display: flex;
  flex-direction: column;
  align-items: center;
  padding-top: 3px;
  line-height: 15px;
  gap: 5px;
  white-space: nowrap;
  color: white;
  border-left: 1px solid #849286;
  background: ${({ $sell }) =>
    $sell ? "linear-gradient(#e65a58, #e04645)" : "linear-gradient(#38c342, #25b52e)"};
`;

const Multi = styled.div`
  width: 166px;
  display: flex;
  flex-direction: column;
  border-left: 1px solid ${line};
  border-right: 1px solid ${line};
`;

const MultiTop = styled.div`
  height: 20px;
  display: flex;
  align-items: center;
  padding: 0 0 1px 29px;
  border-bottom: 1px solid ${line};

  span {
    width: 51px;
    margin-left: 14px;
  }
`;

const Switch = styled.div`
  width: 27px;
  height: 13px;
  padding: 1px;
  border: 1px solid #555;
  border-radius: 7px;

  i {
    display: block;
    width: 9px;
    height: 9px;
    border-radius: 50%;
    background: black;
  }
`;

const MultiBottom = styled.div`
  flex: 1;
  display: flex;
`;

const Leg = styled.div`
  flex: 1;
  display: flex;
  align-items: center;
  gap: 4px;
  padding: 0 0 2px 6px;

  & + & {
    border-left: 1px solid ${line};
  }

  em {
    font-style: normal;
    color: #858585;
  }
`;

const Check = styled.div`
  width: 13px;
  height: 13px;
  border: 1px solid #62717c;
  border-radius: 2px;
`;

const Percent = styled.div`
  width: 24px;
  height: 23px;
  margin-left: 3px;
  line-height: 23px;
  text-align: center;
  color: #858585;
  border: 1px solid #62717c;
  border-radius: 2px;
`;

const ChartRow = styled.div`
  height: 515px;
  flex-shrink: 0;
  display: flex;
  box-shadow: inset 0 1px ${line};
`;

const Plot = styled.div`
  width: 1109px;
  position: relative;
  border-top: 1px solid ${line};
`;

const ChartSvg = styled.svg`
  width: 1109px;
  height: 515px;
  margin-top: -1px;
`;

const Legend = styled.div`
  position: absolute;
  top: -1px;
  left: 0;
  height: 21px;
  display: flex;
  font-size: 12.1px;
  background: #cedce5;
  border-top: 1px solid ${line};
  border-bottom: 1px solid ${line};
`;

const LegendItem = styled.div`
  width: ${({ $width }) => $width}px;
  display: flex;
  align-items: center;
  justify-content: ${({ $icons }) => ($icons ? "center" : "flex-start")};
  gap: ${({ $icons }) => ($icons ? 4 : 3)}px;
  padding: 0 0 1px ${({ $icons }) => ($icons ? 0 : 4)}px;
  white-space: nowrap;
  border-right: 1px solid ${line};
`;

const Swatch = styled.span`
  width: 11px;
  height: 11px;
  flex-shrink: 0;
  background: ${({ $colors }) =>
    `linear-gradient(90deg, ${$colors
      .map((c, i) => `${c} ${(i * 100) / $colors.length}% ${((i + 1) * 100) / $colors.length}%`)
      .join(", ")})`};
`;

const Credit = styled.span`
  position: absolute;
  left: 2px;
  bottom: 0;
  line-height: 14px;
`;

const PlotInfo = styled.div`
  position: absolute;
  left: 1067px;
  bottom: 4px;
`;

const PriceAxis = styled.div`
  flex: 1;
  position: relative;
  overflow: hidden;
  background: white;
  border-top: 1px solid ${line};
  border-left: 1px solid ${line};
  margin-left: -1px;
`;

const AxisLabel = styled.div`
  position: absolute;
  left: 0;
  display: flex;
  align-items: center;
  height: 14px;
  margin-top: -8px;
  font-size: ${({ $bold }) => ($bold ? 13.3 : 12.3)}px;
  font-weight: ${({ $bold }) => ($bold ? 700 : 400)};

  &::before {
    content: "";
    width: 4px;
    height: 1px;
    margin-right: 4px;
    background: #555;
  }
`;

const Mark = styled.div`
  position: absolute;
  left: 0;
  width: 5px;
  height: 1px;
  background: ${({ $color }) => $color};
`;

const PriceTag = styled.div`
  position: absolute;
  left: 5px;
  width: ${({ $width }) => $width || 60}px;
  height: ${({ $big }) => ($big ? 24 : 16)}px;
  margin-top: -1px;
  padding-left: 2px;
  line-height: ${({ $big }) => ($big ? 25 : 15)}px;
  font-size: ${({ $big }) => ($big ? 18.3 : 12.3)}px;
  font-weight: ${({ $big }) => ($big ? 700 : 400)};
  color: ${({ $color }) => $color};
  background: ${({ $gold }) =>
    $gold ? "linear-gradient(#ffd21c, #eeb200)" : "linear-gradient(#f4f8fd, #d8e2ee)"};
  border: 1px solid ${line};
`;

const TimeAxis = styled.div`
  height: 19px;
  flex-shrink: 0;
  display: flex;
  background: white;
`;

const Rewind = styled.div`
  width: 28.6px;
  padding: 1px 0 0 2px;
`;

const Circle = styled.div`
  width: 18px;
  height: 18px;
  display: flex;
  align-items: center;
  justify-content: center;
  border-radius: 50%;
  background: #4a7fd4;
`;

const Year = styled.div`
  width: 56.23px;
  display: flex;
  flex-direction: column;
  align-items: center;
  line-height: 18px;

  &::before {
    content: "";
    width: 1px;
    height: 2px;
    margin: 0 3px 1px 0;
    background: ${line};
  }
`;

const Footer = styled.div`
  flex: 1;
  display: flex;
  align-items: center;
  background: #9cbac8;
  border-top: 1px solid #7892a2;
`;

const Share = styled.div`
  width: 28px;
  padding-left: 2px;
`;

const Analyze = styled.div`
  width: 75px;
  height: 26px;
  display: flex;
  align-items: center;
  gap: 6px;
  padding-left: 4px;
  font-size: 12px;
  background: linear-gradient(#fff, #eef0f2);
`;

const FooterIcons = styled.div`
  width: 76px;
  display: flex;
  align-items: center;
  gap: 7px;
  padding-left: 7px;
`;

const ScrollBar = styled.div`
  width: 774px;
  height: 16px;
  display: flex;
  justify-content: space-between;
  background: #a0bdca;
  border: 1px solid #6d8a99;
  border-radius: 3px;
`;

const ScrollButton = styled.div`
  width: 15px;
  display: flex;
  align-items: center;
  justify-content: center;
  background: linear-gradient(#d2e3ea, #adc7d2);
  border-radius: 2px;
`;

const Caret = styled.span`
  width: 5px;
  height: 5px;
  border-top: 2px solid #111;
  border-right: 2px solid #111;
  transform: rotate(${({ $left }) => ($left ? -135 : 45)}deg);
`;

const Actions = styled.div`
  display: flex;
`;

const Action = styled.div`
  width: ${({ $width }) => $width || 29}px;
  display: flex;
  align-items: center;
  justify-content: center;
`;
